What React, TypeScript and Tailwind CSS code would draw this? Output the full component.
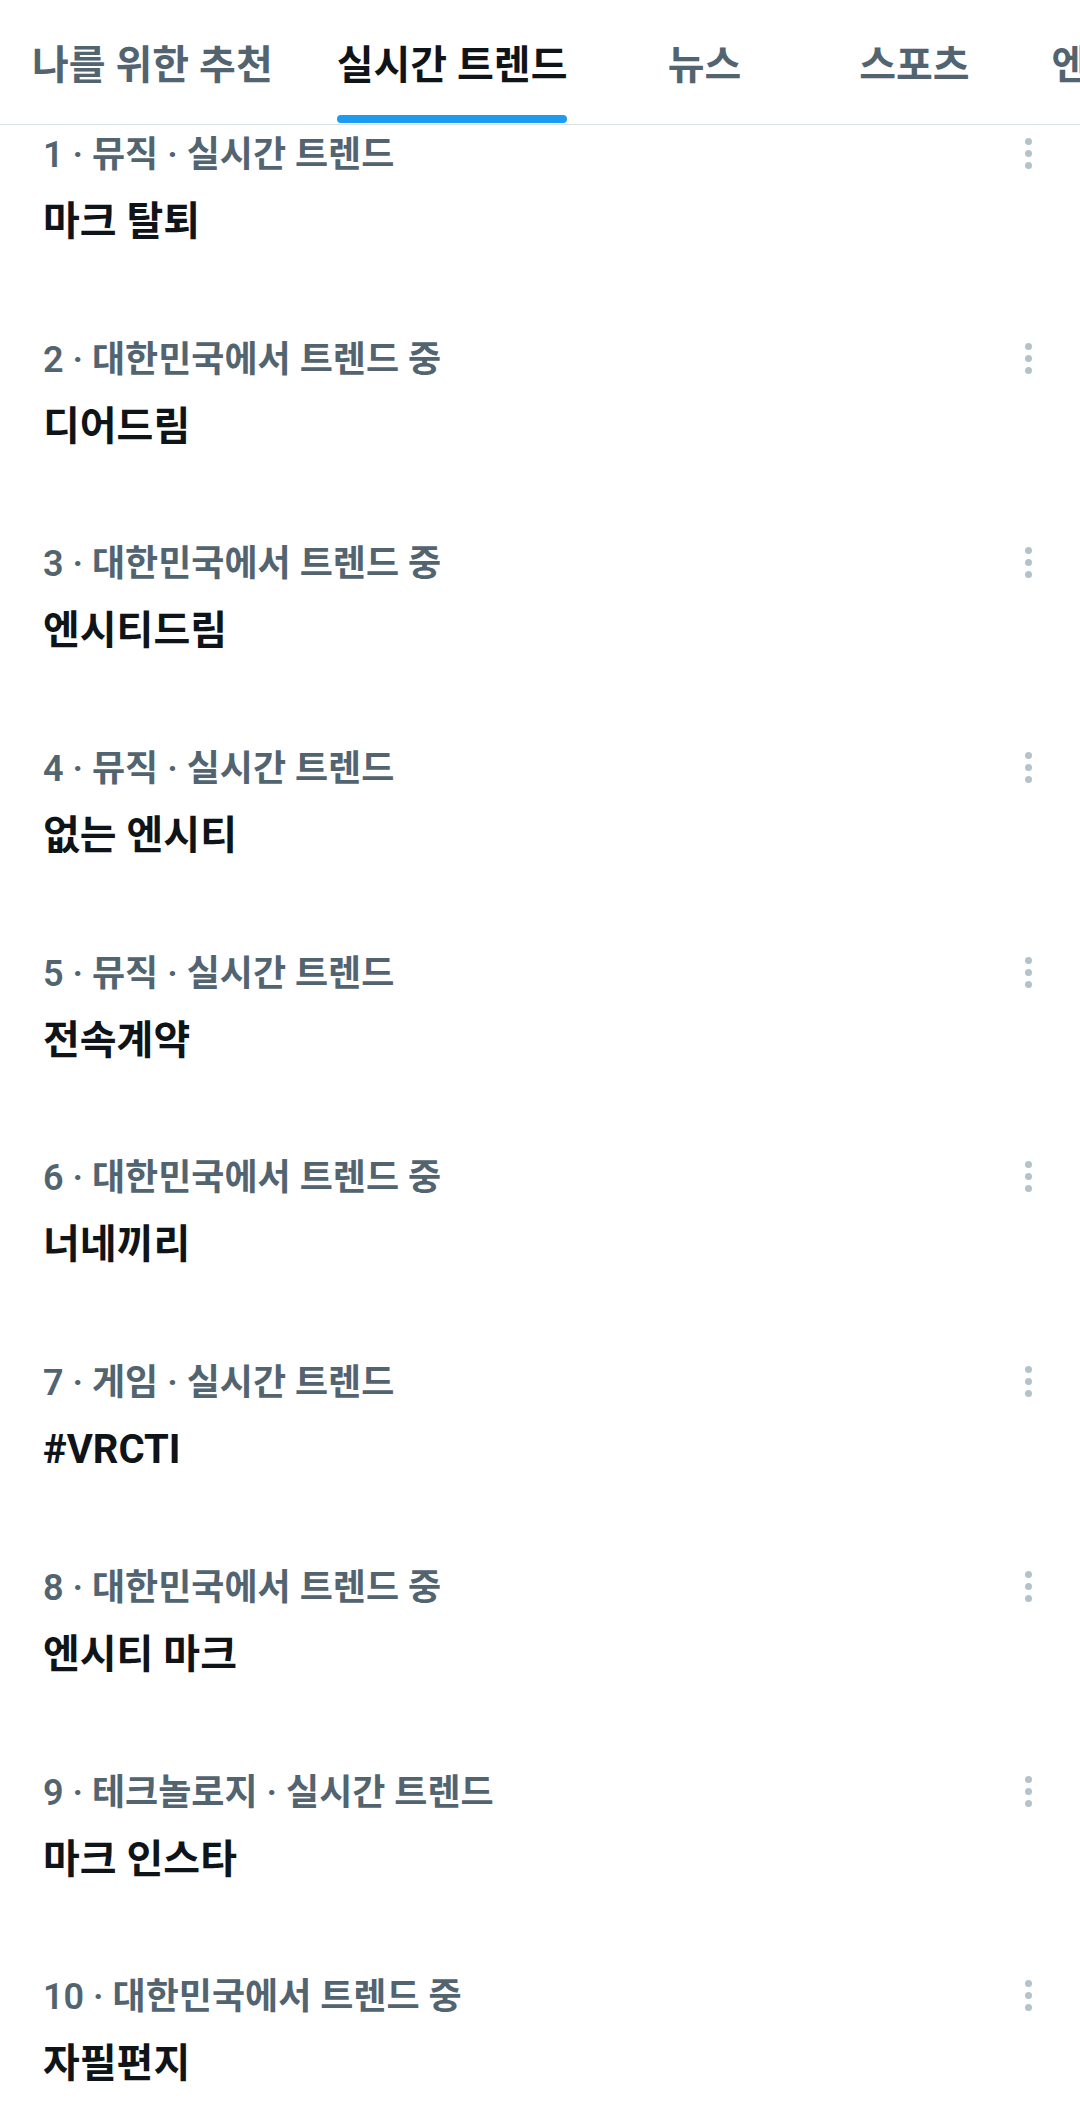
import { useState } from "react";

const tabs = ["나를 위한 추천", "실시간 트렌드", "뉴스", "스포츠", "엔터테인먼트"];

const trends = [
    { meta: "1 · 뮤직 · 실시간 트렌드", title: "마크 탈퇴" },
    { meta: "2 · 대한민국에서 트렌드 중", title: "디어드림" },
    { meta: "3 · 대한민국에서 트렌드 중", title: "엔시티드림" },
    { meta: "4 · 뮤직 · 실시간 트렌드", title: "없는 엔시티" },
    { meta: "5 · 뮤직 · 실시간 트렌드", title: "전속계약" },
    { meta: "6 · 대한민국에서 트렌드 중", title: "너네끼리" },
    { meta: "7 · 게임 · 실시간 트렌드", title: "#VRCTI" },
    { meta: "8 · 대한민국에서 트렌드 중", title: "엔시티 마크" },
    { meta: "9 · 테크놀로지 · 실시간 트렌드", title: "마크 인스타" },
    { meta: "10 · 대한민국에서 트렌드 중", title: "자필편지" },
];

function MoreDots() {
    return (
        <div className="flex flex-col items-center gap-[5px] pt-[5px]">
            <span className="block w-[7px] h-[7px] rounded-full bg-[#b4c2cc]" />
            <span className="block w-[7px] h-[7px] rounded-full bg-[#b4c2cc]" />
            <span className="block w-[7px] h-[7px] rounded-full bg-[#b4c2cc]" />
        </div>
    );
}

export default function App() {
    const [active] = useState(1);

    return (
        <div
            className="w-[1080px] h-[2123px] overflow-hidden bg-white"
            style={{ fontFamily: '"Roboto", "Noto Sans CJK KR", sans-serif' }}
        >
            {/* Tabs */}
            <nav className="flex h-[125px] border-b border-[#d9e1e5] overflow-hidden whitespace-nowrap">
                {tabs.map((t, i) => (
                    <div
                        key={t}
                        className="relative flex shrink-0 min-w-[210px] justify-center px-[32px] pt-[41px]"
                    >
                        <span
                            className={
                                i === active
                                    ? "text-[40px] leading-[50px] font-bold text-[#0f1419]"
                                    : "text-[40px] leading-[50px] font-semibold text-[#536471]"
                            }
                        >
                            {t}
                        </span>
                        {i === active && (
                            <span className="absolute left-[32px] right-[32px] bottom-[1px] h-[8px] rounded-full bg-[#1d9bf0]" />
                        )}
                    </div>
                ))}
            </nav>

            {/* Trend list */}
            <section className="pt-[8px]">
                {trends.map((item) => (
                    <div key={item.title} className="flex h-[204.7px] pl-[43px] pr-[48px]">
                        <div className="flex-1 flex flex-col">
                            <p className="text-[36px] leading-[44px] font-semibold text-[#536471]">
                                {item.meta}
                            </p>
                            <h2 className="mt-[21px] text-[40px] leading-[48px] font-bold text-[#0f1419]">
                                {item.title}
                            </h2>
                        </div>
                        <MoreDots />
                    </div>
                ))}
            </section>
        </div>
    );
}
